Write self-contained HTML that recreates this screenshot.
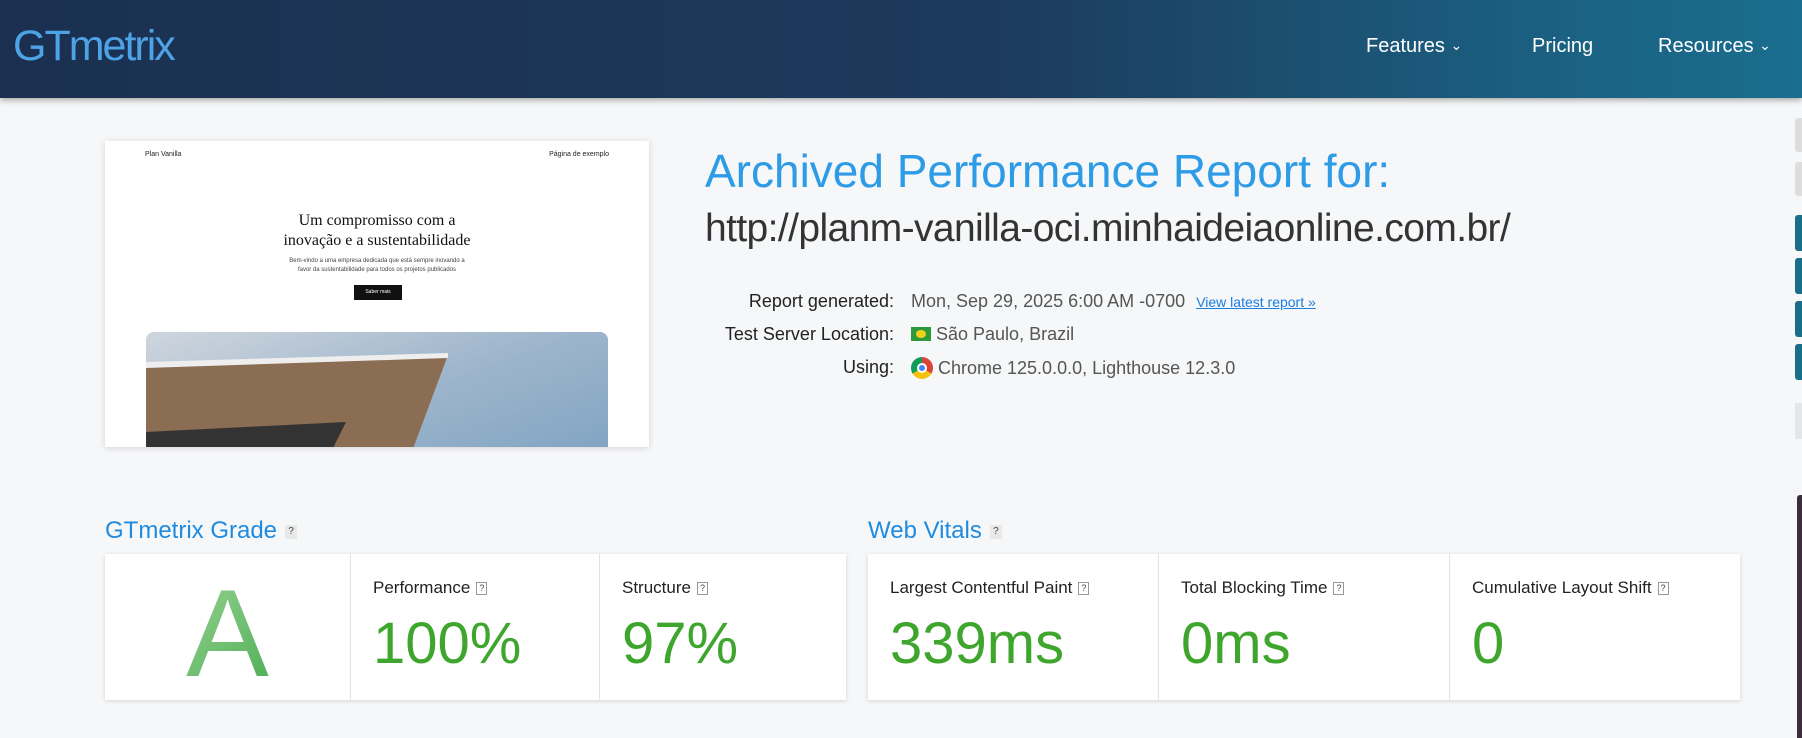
<!DOCTYPE html>
<html><head><meta charset="utf-8"><style>
*{margin:0;padding:0;box-sizing:border-box}
body{width:1802px;height:738px;overflow:hidden;background:#f6f7f8;font-family:"Liberation Sans",sans-serif;position:relative}
.hdr{position:absolute;left:0;top:0;width:1802px;height:98px;background:linear-gradient(90deg,#1b3050 0%,#1c3a5c 55%,#1b5f80 85%,#1a6e8f 100%);box-shadow:0 2px 6px rgba(0,0,0,.35)}
.logo{position:absolute;left:13px;top:22px;font-size:43px;color:#4ea3e6;letter-spacing:-2px}
.nav{position:absolute;top:35px;color:#fff;font-size:20px}
.chev{font-size:14px;vertical-align:2px}
.shot{position:absolute;left:105px;top:141px;width:544px;height:306px;background:#fff;box-shadow:0 1px 6px rgba(0,0,0,.15);overflow:hidden}
.t{position:absolute;color:#333}
.lab{position:absolute;right:908px;font-size:18px;color:#222;text-align:right}
.val{position:absolute;left:911px;font-size:18px;color:#555}
.h2{position:absolute;font-size:24px;color:#1f8be0}
.q{display:inline-block;width:12px;height:14px;background:#e8e8e8;font-size:10px;color:#444;text-align:center;line-height:14px;vertical-align:middle;margin-left:8px}
.card{position:absolute;top:554px;height:146px;background:#fff;box-shadow:0 1px 4px rgba(0,0,0,.15)}
.cell{position:absolute;top:0;height:146px;border-left:1px solid #e2e2e2}
.cl{position:absolute;left:22px;top:24px;font-size:17px;color:#222}
.cv{position:absolute;left:22px;top:56px;font-size:58px;color:#3ea52d}
.qq{display:inline-block;width:11px;height:13px;border:1px solid #999;font-size:9px;line-height:11px;text-align:center;margin-left:6px;vertical-align:middle;color:#444}
</style></head><body>
<div class="hdr">
<div class="logo">GTmetrix</div>
<div class="nav" style="left:1366px">Features <span class="chev">⌄</span></div>
<div class="nav" style="left:1532px">Pricing</div>
<div class="nav" style="left:1658px">Resources <span class="chev">⌄</span></div>
</div>

<div class="shot">
<div style="position:absolute;left:40px;top:10px;font-size:7px;color:#222">Plan Vanilla</div>
<div style="position:absolute;right:40px;top:10px;font-size:7px;color:#222">Página de exemplo</div>
<div style="position:absolute;left:0;width:544px;top:70px;text-align:center;font-family:'Liberation Serif',serif;font-size:16px;line-height:20px;color:#111">Um compromisso com a<br>inovação e a sustentabilidade</div>
<div style="position:absolute;left:0;width:544px;top:116px;text-align:center;font-size:6px;line-height:9px;color:#444">Bem-vindo a uma empresa dedicada que está sempre inovando a<br>favor da sustentabilidade para todos os projetos publicados</div>
<div style="position:absolute;left:249px;top:144px;width:48px;height:15px;background:#111;color:#fff;font-size:5px;text-align:center;line-height:15px">Saber mais</div>
<div style="position:absolute;left:41px;top:191px;width:462px;height:130px;border-radius:8px;background:linear-gradient(160deg,#cfd6de 0%,#9fb6cc 50%,#7fa3c2 100%);overflow:hidden">
<svg width="462" height="130" style="position:absolute;left:0;top:0"><polygon points="0,32 302,23 262,130 0,130" fill="#8a6d52"/><polygon points="0,30 302,21 302,26 0,36" fill="#eee"/><polygon points="0,100 200,90 180,130 0,130" fill="#333"/></svg>
</div>
</div>

<div class="t" style="left:705px;top:144px;font-size:46px;color:#2d9be6">Archived Performance Report for:</div>
<div class="t" style="left:705px;top:207px;font-size:39px;color:#333;letter-spacing:-0.6px">http://planm-vanilla-oci.minhaideiaonline.com.br/</div>

<div class="lab" style="top:291px">Report generated:</div>
<div class="lab" style="top:324px">Test Server Location:</div>
<div class="lab" style="top:357px">Using:</div>
<div class="val" style="top:291px">Mon, Sep 29, 2025 6:00 AM -0700 <span style="color:#1a7de0;text-decoration:underline;font-size:14px;margin-left:6px">View latest report »</span></div>
<div class="val" style="top:324px"><span style="display:inline-block;width:20px;height:14px;background:#2d9a3a;vertical-align:-1px;position:relative"><span style="position:absolute;left:5px;top:3px;width:10px;height:8px;border-radius:50%;background:#f2d01c"></span></span> São Paulo, Brazil</div>
<div class="val" style="top:357px"><span style="display:inline-block;width:22px;height:22px;border-radius:50%;background:conic-gradient(#db4437 0 120deg,#f4c20d 120deg 240deg,#0f9d58 240deg);vertical-align:-5px;position:relative"><span style="position:absolute;left:6px;top:6px;width:10px;height:10px;border-radius:50%;background:#4285f4;border:2px solid #fff"></span></span> Chrome 125.0.0.0, Lighthouse 12.3.0</div>

<div class="h2" style="left:105px;top:517px">GTmetrix Grade<span class="q">?</span></div>
<div class="h2" style="left:868px;top:517px">Web Vitals<span class="q">?</span></div>

<div class="card" style="left:105px;width:741px">
<div style="position:absolute;left:0;width:245px;top:18px;text-align:center;font-size:124px;line-height:124px;background:linear-gradient(135deg,#b5e0ad,#2fa03a);-webkit-background-clip:text;color:transparent">A</div>
<div class="cell" style="left:245px;width:249px"><div class="cl">Performance<span class="qq">?</span></div><div class="cv">100%</div></div>
<div class="cell" style="left:494px;width:247px"><div class="cl">Structure<span class="qq">?</span></div><div class="cv">97%</div></div>
</div>
<div class="card" style="left:868px;width:872px">
<div class="cell" style="left:0;width:290px;border-left:none"><div class="cl">Largest Contentful Paint<span class="qq">?</span></div><div class="cv">339ms</div></div>
<div class="cell" style="left:290px;width:291px"><div class="cl">Total Blocking Time<span class="qq">?</span></div><div class="cv">0ms</div></div>
<div class="cell" style="left:581px;width:291px"><div class="cl">Cumulative Layout Shift<span class="qq">?</span></div><div class="cv">0</div></div>
</div>

<div style="position:absolute;left:1795px;top:118px;width:7px;height:34px;background:#ddd;border-radius:3px 0 0 3px"></div>
<div style="position:absolute;left:1795px;top:162px;width:7px;height:34px;background:#ddd;border-radius:3px 0 0 3px"></div>
<div style="position:absolute;left:1795px;top:215px;width:7px;height:36px;background:#1b6e8a;border-radius:3px 0 0 3px"></div>
<div style="position:absolute;left:1795px;top:258px;width:7px;height:36px;background:#1b6e8a;border-radius:3px 0 0 3px"></div>
<div style="position:absolute;left:1795px;top:301px;width:7px;height:36px;background:#1b6e8a;border-radius:3px 0 0 3px"></div>
<div style="position:absolute;left:1795px;top:344px;width:7px;height:36px;background:#1b6e8a;border-radius:3px 0 0 3px"></div>
<div style="position:absolute;left:1795px;top:403px;width:7px;height:36px;background:#e4e6e9"></div>
<div style="position:absolute;left:1797px;top:495px;width:5px;height:243px;background:#3a2d3e;border-radius:3px 0 0 0"></div>
</body></html>
